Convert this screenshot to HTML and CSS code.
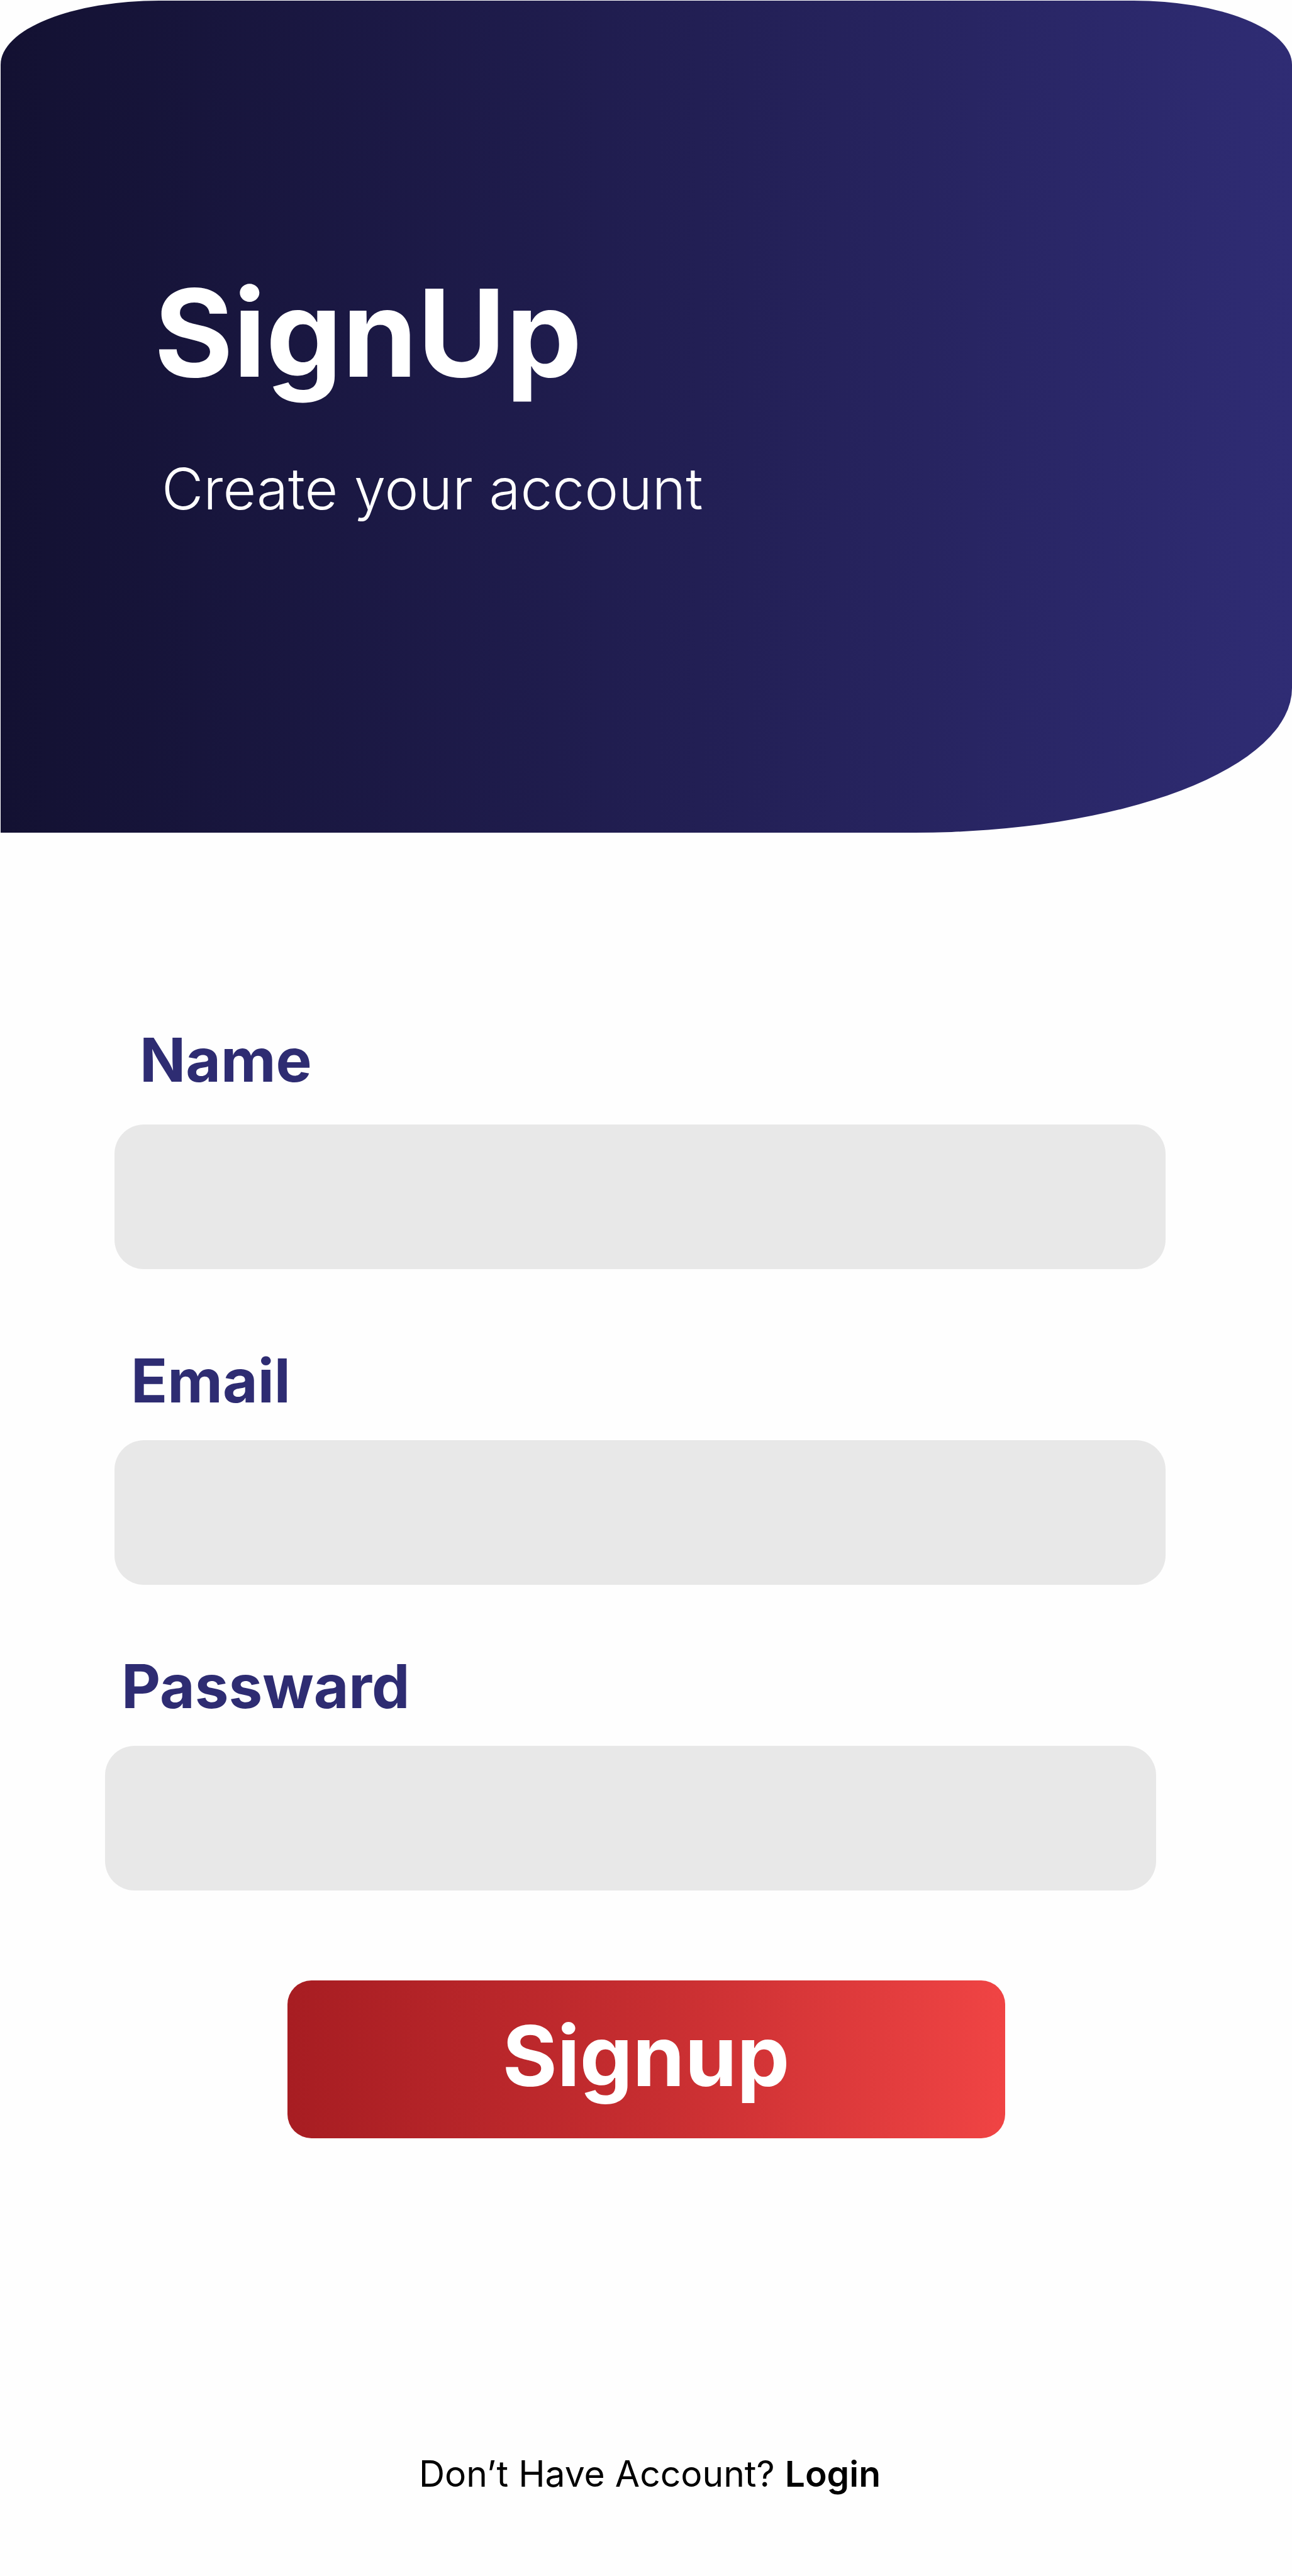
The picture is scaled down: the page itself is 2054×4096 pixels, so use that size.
FILE: index.html
```html
<!DOCTYPE html>
<html lang="en">
<head>
  <meta charset="utf-8">
  <meta name="viewport" content="width=device-width, initial-scale=1">
  <title>SignUp</title>
  <link rel="stylesheet" href="styles.css">
</head>
<body>
  <header class="hero">
    <h1 class="hero-title">SignUp</h1>
    <p class="hero-subtitle">Create your account</p>
  </header>

  <main>
    <form class="form">
      <div class="fields">
        <div class="field field-name">
          <label class="label" for="name">Name</label>
          <input class="input" id="name" name="name" type="text">
        </div>
        <div class="field field-email">
          <label class="label" for="email">Email</label>
          <input class="input" id="email" name="email" type="email">
        </div>
        <div class="field field-password">
          <label class="label" for="password">Passward</label>
          <input class="input" id="password" name="password" type="password">
        </div>
      </div>
      <button class="submit" type="submit">Signup</button>
    </form>
  </main>

  <footer class="footer">
    <p class="footer-text">Don’t Have Account? <a class="login" href="#">Login</a></p>
  </footer>
</body>
</html>
```
FILE: styles.css
```css
* {
  box-sizing: border-box;
}

body {
  margin: 0;
  background: #fefefe;
  color: #000;
  font-family: Inter, "Noto Sans", sans-serif;
}

h1,
p {
  margin: 0;
}

/* Banner */
.hero {
  margin: 1px 0 0 1px;
  padding: 412px 244px 491px;
  background: linear-gradient(90deg, #131132, #221f54 54%, #2f2c74);
  border-radius: 252px 252px 600px 0 / 102px 102px 230px 0;
  color: #fff;
}

.hero-title {
  font-size: 192px;
  font-weight: 700;
  line-height: 232px;
}

.hero-subtitle {
  margin-top: 76px;
  padding-left: 12px;
  font-size: 91px;
  font-weight: 300;
  line-height: 112px;
}

/* Form */
.form {
  display: flex;
  flex-direction: column;
  align-items: center;
  padding-top: 303px;
}

.fields {
  width: 100%;
  padding: 0 201px 0 182px;
}

.field {
  display: flex;
  flex-direction: column;
  gap: 37px;
}

.field-name {
  gap: 45px;
}

.field-email {
  margin-top: 119px;
}

.field-password {
  margin: 103px 15px 0 -15px;
}

.label {
  padding-left: 26px;
  color: #2e2c72;
  font-size: 96px;
  font-weight: 700;
  line-height: 116px;
}

.field-name .label {
  padding-left: 40px;
}

.input {
  width: 100%;
  height: 230px;
  padding: 0 48px;
  border: 0;
  border-radius: 47px;
  background: #e8e8e8;
  color: #2e2c72;
  font: inherit;
  font-size: 96px;
}

.submit {
  width: 1141px;
  max-width: 100%;
  height: 251px;
  margin-top: 143px;
  padding: 0 0 12px;
  border: 0;
  border-radius: 38px;
  background: linear-gradient(90deg, #a71d22, #c62d30 50%, #f04444);
  color: #fff;
  font: inherit;
  font-size: 133px;
  font-weight: 700;
  cursor: pointer;
}

/* Login prompt */
.footer {
  padding: 500px 0 126px 12px;
  text-align: center;
}

.footer-text {
  font-size: 57px;
  line-height: 68px;
}

.login {
  color: inherit;
  font-weight: 600;
  text-decoration: none;
}
```
